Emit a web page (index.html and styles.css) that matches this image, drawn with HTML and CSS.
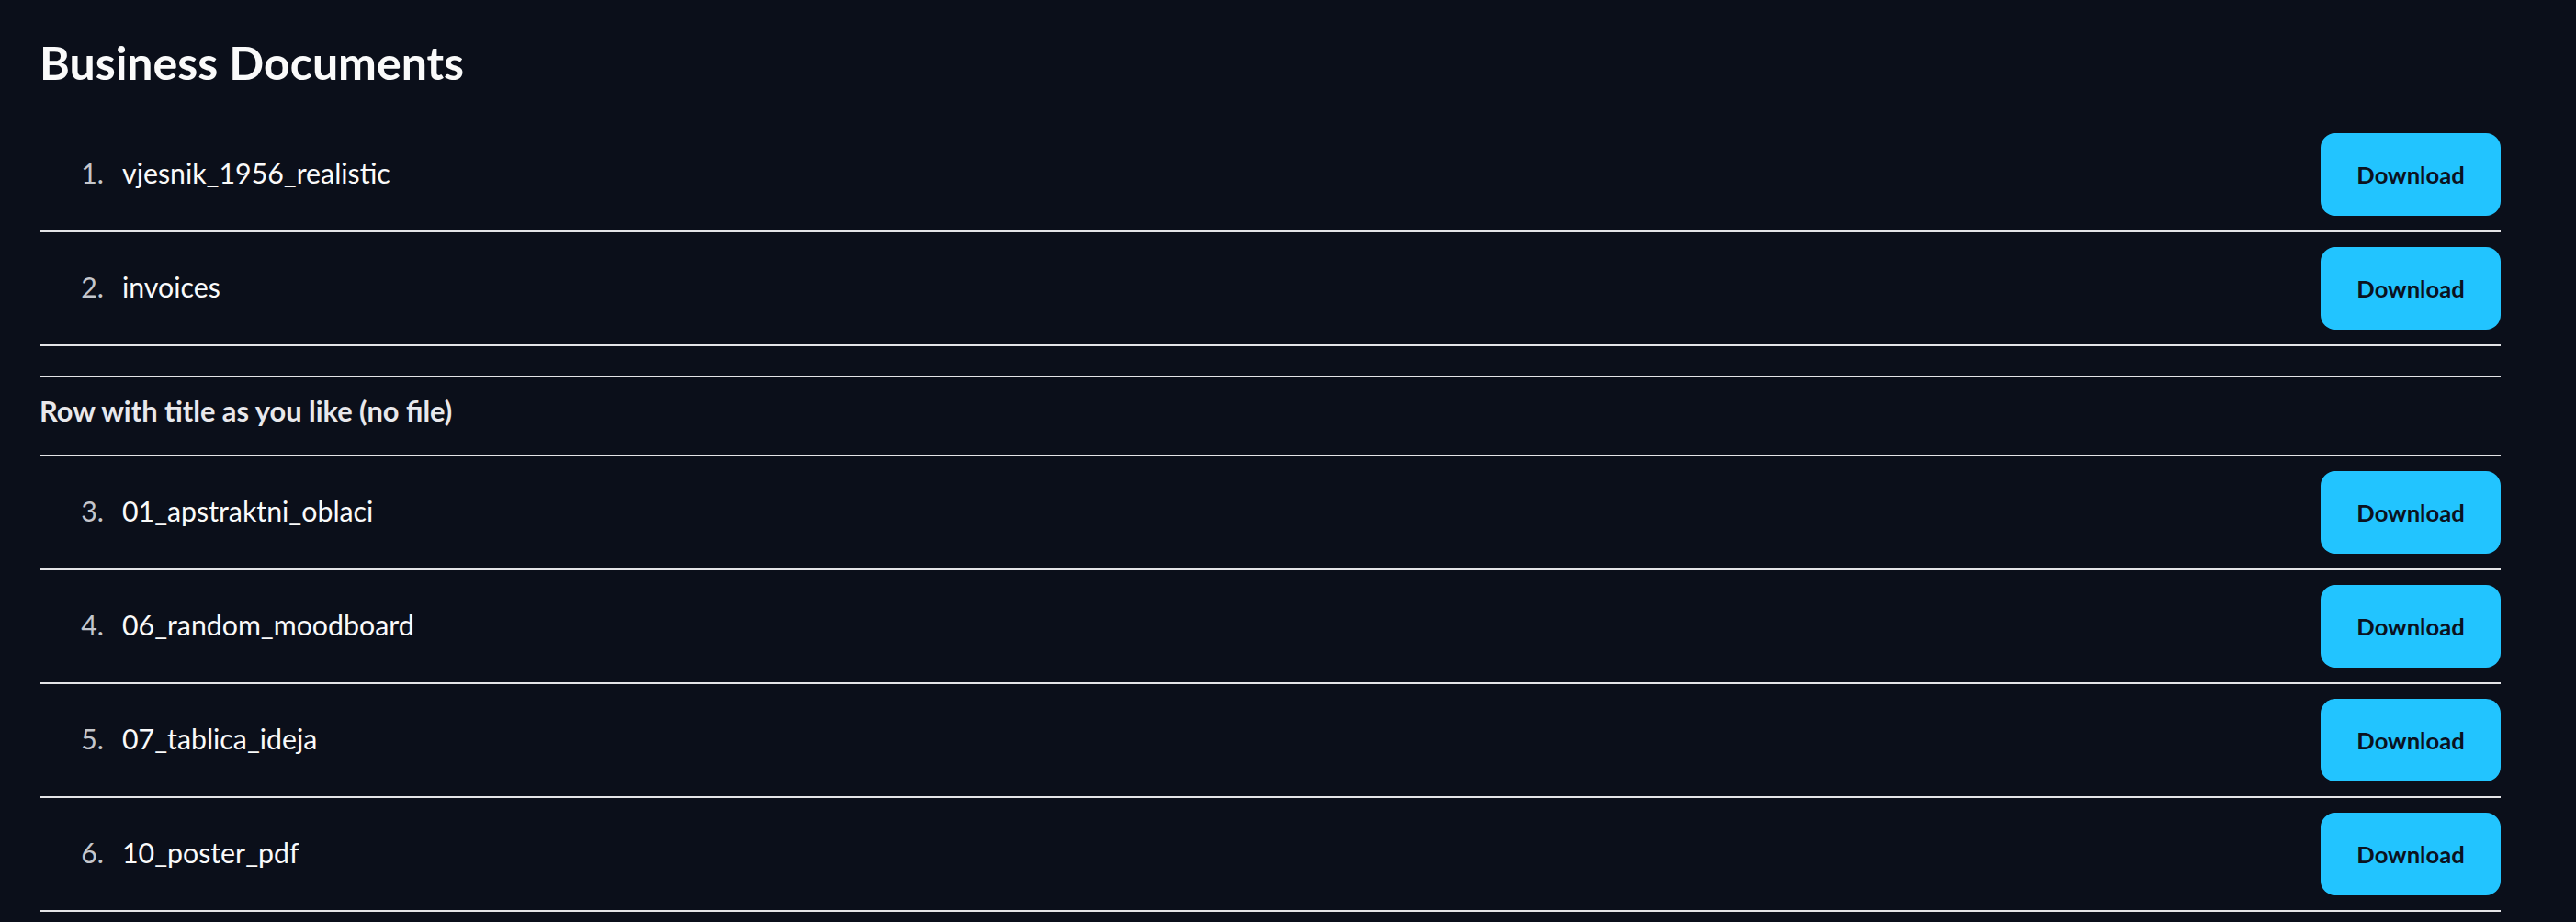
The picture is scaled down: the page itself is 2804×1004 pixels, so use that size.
FILE: index.html
```html
<!DOCTYPE html>
<html lang="en">
<head>
<meta charset="utf-8">
<title>Business Documents</title>
<link rel="stylesheet" href="styles.css">
</head>
<body>
<main class="page">
  <h3 class="title">Business Documents</h3>
  <div class="list">
    <div class="row">
      <div class="name"><span class="num">1.</span><span class="file">vjesnik_1956_realistic</span></div>
      <button class="btn">Download</button>
    </div>
    <div class="row">
      <div class="name"><span class="num">2.</span><span class="file">invoices</span></div>
      <button class="btn">Download</button>
    </div>
    <div class="section">Row with title as you like (no file)</div>
    <div class="row">
      <div class="name"><span class="num">3.</span><span class="file">01_apstraktni_oblaci</span></div>
      <button class="btn">Download</button>
    </div>
    <div class="row">
      <div class="name"><span class="num">4.</span><span class="file">06_random_moodboard</span></div>
      <button class="btn">Download</button>
    </div>
    <div class="row">
      <div class="name"><span class="num">5.</span><span class="file">07_tablica_ideja</span></div>
      <button class="btn">Download</button>
    </div>
    <div class="row">
      <div class="name"><span class="num">6.</span><span class="file">10_poster_pdf</span></div>
      <button class="btn">Download</button>
    </div>
  </div>
</main>
</body>
</html>
```

FILE: styles.css
```css
html, body {
  margin: 0;
  padding: 0;
  background: #0b0f1a;
}
body {
  font-family: Lato, "Open Sans", sans-serif;
  color: #fafafa;
}
.page {
  width: 2679px;
  padding: 35px 0 0 43px;
}
.title {
  margin: 0;
  font-size: 50px;
  font-weight: 700;
  line-height: 67px;
  height: 94px;
  color: #fafafa;
}
.list {
  display: flex;
  flex-direction: column;
}
.row {
  display: flex;
  align-items: center;
  justify-content: space-between;
  padding: 16px 0;
  border-bottom: 2px solid #e4e4e7;
}
.name {
  display: flex;
  align-items: baseline;
  font-size: 30.3px;
  padding-bottom: 4px;
}
.num {
  width: 70px;
  text-align: right;
  padding-right: 20px;
  color: #c4c6cc;
}
.file {
  color: #fafafa;
}
.btn {
  width: 196px;
  height: 90px;
  border: none;
  border-radius: 16px;
  background: #22c4ff;
  color: #0b1220;
  font-family: Lato, "Open Sans", sans-serif;
  font-size: 25.6px;
  font-weight: 700;
  padding: 0;
}
.section {
  margin-top: 32px;
  border-top: 2px solid #e4e4e7;
  border-bottom: 2px solid #e4e4e7;
  padding: 15px 0 25px;
  line-height: 44px;
  font-size: 30.8px;
  font-weight: 700;
  color: #e8e8ec;
}
```
